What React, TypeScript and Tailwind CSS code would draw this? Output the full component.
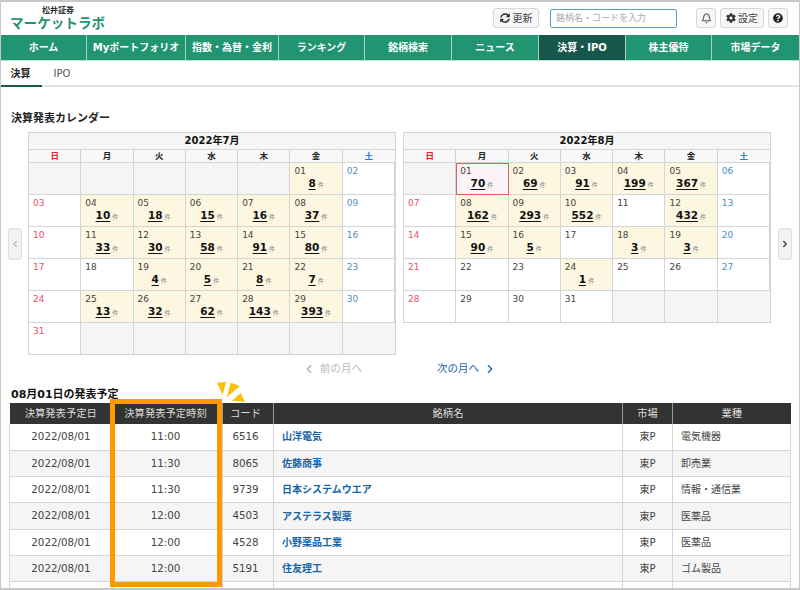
import { Bell, ChevronLeft, ChevronRight } from "lucide-react"
import { FaCog, FaQuestionCircle, FaSyncAlt } from "react-icons/fa"

type Day = { d?: string; n?: number; today?: boolean }

const navItems = [
  { label: "ホーム", w: "w-[86px]" },
  { label: "Myポートフォリオ", w: "w-[99px]" },
  { label: "指数・為替・金利", w: "w-[93px]" },
  { label: "ランキング", w: "w-[86px]" },
  { label: "銘柄検索", w: "w-[87px]" },
  { label: "ニュース", w: "w-[87px]" },
  { label: "決算・IPO", w: "w-[87px]", active: true },
  { label: "株主優待", w: "w-[86px]" },
  { label: "市場データ", w: "w-[87px]" },
]

const weekdays = ["日", "月", "火", "水", "木", "金", "土"]

const july: Day[] = [
  {}, {}, {}, {}, {}, { d: "01", n: 8 }, { d: "02" },
  { d: "03" }, { d: "04", n: 10 }, { d: "05", n: 18 }, { d: "06", n: 15 }, { d: "07", n: 16 }, { d: "08", n: 37 }, { d: "09" },
  { d: "10" }, { d: "11", n: 33 }, { d: "12", n: 30 }, { d: "13", n: 58 }, { d: "14", n: 91 }, { d: "15", n: 80 }, { d: "16" },
  { d: "17" }, { d: "18" }, { d: "19", n: 4 }, { d: "20", n: 5 }, { d: "21", n: 8 }, { d: "22", n: 7 }, { d: "23" },
  { d: "24" }, { d: "25", n: 13 }, { d: "26", n: 32 }, { d: "27", n: 62 }, { d: "28", n: 143 }, { d: "29", n: 393 }, { d: "30" },
  { d: "31" }, {}, {}, {}, {}, {}, {},
]

const august: Day[] = [
  {}, { d: "01", n: 70, today: true }, { d: "02", n: 69 }, { d: "03", n: 91 }, { d: "04", n: 199 }, { d: "05", n: 367 }, { d: "06" },
  { d: "07" }, { d: "08", n: 162 }, { d: "09", n: 293 }, { d: "10", n: 552 }, { d: "11" }, { d: "12", n: 432 }, { d: "13" },
  { d: "14" }, { d: "15", n: 90 }, { d: "16", n: 5 }, { d: "17" }, { d: "18", n: 3 }, { d: "19", n: 3 }, { d: "20" },
  { d: "21" }, { d: "22" }, { d: "23" }, { d: "24", n: 1 }, { d: "25" }, { d: "26" }, { d: "27" },
  { d: "28" }, { d: "29" }, { d: "30" }, { d: "31" }, {}, {}, {},
]

const rows = [
  { time: "11:00", code: "6516", name: "山洋電気", sector: "電気機器" },
  { time: "11:30", code: "8065", name: "佐藤商事", sector: "卸売業" },
  { time: "11:30", code: "9739", name: "日本システムウエア", sector: "情報・通信業" },
  { time: "12:00", code: "4503", name: "アステラス製薬", sector: "医薬品" },
  { time: "12:00", code: "4528", name: "小野薬品工業", sector: "医薬品" },
  { time: "12:00", code: "5191", name: "住友理工", sector: "ゴム製品" },
]

const columns = [
  { label: "決算発表予定日", className: "" },
  { label: "決算発表予定時刻", className: "pr-[4px]" },
  { label: "コード", className: "pr-[5px]" },
  { label: "銘柄名", className: "" },
  { label: "市場", className: "" },
  { label: "業種", className: "" },
]

function DayCell({ day, col }: { day: Day; col: number }) {
  if (!day.d) return <div className="border-r border-b border-[#d4d4d4] bg-[#f5f5f5] last:border-r-0" />
  const dateColor = col === 0 ? "text-[#f0505a]" : col === 6 ? "text-[#4a8fcb]" : "text-[#444]"
  const bg = day.today ? "bg-[#fdf2f6]" : day.n ? "bg-[#fdf6e0]" : "bg-white"
  return (
    <div
      className={`relative flex flex-col border-r border-b pt-[2px] pl-[4px] last:border-r-0 ${bg} ${
        day.today ? "border-[#e85a64] outline outline-1 outline-[#e85a64] -outline-offset-1" : "border-[#d4d4d4]"
      }`}
    >
      <span className={`text-[9px] leading-[12px] ${dateColor}`}>{day.d}</span>
      {day.n !== undefined && (
        <span className="-mt-[1px] flex items-baseline justify-center pr-[4px] leading-[14px]">
          <span className="text-[10.5px] font-bold text-[#111] underline underline-offset-2">{day.n}</span>
          <span className="ml-[2px] text-[6px] text-[#888]">件</span>
        </span>
      )}
    </div>
  )
}

function Calendar({ title, days }: { title: string; days: Day[] }) {
  return (
    <div className="w-[368px] border-x border-t border-[#d4d4d4]">
      <div className="h-[17px] border-b border-[#d4d4d4] bg-[#f4f7f5] text-center text-[10px] leading-[15px] font-bold text-[#111]">
        {title}
      </div>
      <div className="grid h-[13px] grid-cols-7 border-b border-[#d4d4d4] bg-[#f7f8f7]">
        {weekdays.map((w, i) => (
          <div
            key={w}
            className={`border-r border-[#d4d4d4] text-center text-[8.5px] leading-[12px] font-bold last:border-r-0 ${
              i === 0 ? "text-[#e8202a]" : i === 6 ? "text-[#2f80c8]" : "text-[#222]"
            }`}
          >
            {w}
          </div>
        ))}
      </div>
      <div className="grid auto-rows-[32px] grid-cols-7">
        {days.map((day, i) => (
          <DayCell key={i} day={day} col={i % 7} />
        ))}
      </div>
    </div>
  )
}

function PagerButton({ right }: { right?: boolean }) {
  return (
    <div className="mt-[96px] flex h-[32px] w-[14px] items-center justify-center rounded-[3px] border border-[#ddd] bg-[#f2f2f2]">
      {right ? (
        <ChevronRight className="h-[10px] w-[10px] text-[#333]" strokeWidth={3} />
      ) : (
        <ChevronLeft className="h-[10px] w-[10px] text-[#bbb]" strokeWidth={3} />
      )}
    </div>
  )
}

export default function App() {
  return (
    <div
      className="relative h-[590px] w-[800px] overflow-hidden border-t-2 border-l border-r border-b-2 border-[#c8c8c8] bg-white text-[#444]"
      style={{ fontFamily: '"DejaVu Sans", "Noto Sans CJK JP", sans-serif' }}
    >
      <header className="flex h-[33px] items-start justify-between">
        <div className="pl-[9px]">
          <div className="pl-[32px] pt-[5px] text-[8px] leading-[8px] font-bold text-[#333]">松井証券</div>
          <div className="text-[13.6px] leading-[17px] font-bold text-[#1f9470]">マーケットラボ</div>
        </div>
        <div className="flex items-center pt-[6px] pr-[11px]">
          <button className="flex h-[20px] w-[46px] items-center justify-center gap-[3px] rounded-[3px] border border-[#d8d8d8] bg-[#f7f7f7] text-[10px] text-[#444]">
            <FaSyncAlt className="h-[10px] w-[10px] text-[#333]" />
            更新
          </button>
          <input
            readOnly
            placeholder="銘柄名・コードを入力"
            className="ml-[11px] h-[19px] w-[127px] rounded-[2px] border border-[#5b9bd5] px-[5px] text-[9px] placeholder:text-[#aaa]"
          />
          <button className="ml-[19px] flex h-[20px] w-[20px] items-center justify-center rounded-[3px] border border-[#d8d8d8] bg-[#f7f7f7]">
            <Bell className="h-[11px] w-[11px] text-[#333]" />
          </button>
          <button className="ml-[4px] flex h-[20px] w-[44px] items-center justify-center gap-[2px] rounded-[3px] border border-[#d8d8d8] bg-[#f7f7f7] text-[10px] text-[#444]">
            <FaCog className="h-[10px] w-[10px] text-[#333]" />
            設定
          </button>
          <button className="ml-[4px] flex h-[20px] w-[20px] items-center justify-center rounded-[3px] border border-[#d8d8d8] bg-[#f7f7f7]">
            <FaQuestionCircle className="h-[10px] w-[10px] text-[#222]" />
          </button>
        </div>
      </header>

      <nav className="flex h-[26px] border-b border-[#bfe3d6]">
        {navItems.map((item) => (
          <div
            key={item.label}
            className={`flex items-center justify-center border-r border-[#a5d3c2] text-[10px] font-bold whitespace-nowrap text-white last:border-r-0 ${item.w} ${
              item.active ? "bg-[#17574a]" : "bg-[#219571]"
            }`}
          >
            {item.label}
          </div>
        ))}
      </nav>

      <div className="flex h-[26px] border-b-2 border-[#e2e2e2]">
        <div className="-mb-[2px] flex w-[41px] items-center justify-center border-b-2 border-[#17574a] pr-[2px] text-[10px] font-bold text-[#222]">
          決算
        </div>
        <div className="flex w-[40px] items-center justify-center text-[10px] text-[#555]">IPO</div>
      </div>

      <h2 className="mt-[24px] ml-[10px] text-[11px] leading-[16px] font-bold text-[#222]">決算発表カレンダー</h2>

      <div className="mt-[5px] flex items-start pl-[7px]">
        <PagerButton />
        <div className="ml-[6px] flex items-start gap-[7px]">
          <Calendar title="2022年7月" days={july} />
          <Calendar title="2022年8月" days={august} />
        </div>
        <div className="ml-[7px]">
          <PagerButton right />
        </div>
      </div>

      <div className="mt-[6px] flex h-[16px] items-center pl-[301px] text-[10.5px]">
        <ChevronLeft className="h-[14px] w-[14px] text-[#aaa]" />
        <span className="ml-[4px] text-[#bbb]">前の月へ</span>
        <span className="ml-[75px] text-[#1565a8]">次の月へ</span>
        <ChevronRight className="ml-[4px] h-[14px] w-[14px] text-[#1565a8]" />
      </div>

      <h2 className="mt-[10px] ml-[10px] text-[11px] leading-[15px] font-bold text-[#111]">08月01日の発表予定</h2>

      <table className="mt-[1px] ml-[8px] w-[781px] table-fixed border-collapse text-[10px]">
        <colgroup>
          <col className="w-[103px]" />
          <col className="w-[110px]" />
          <col className="w-[51px]" />
          <col className="w-[349px]" />
          <col className="w-[50px]" />
          <col className="w-[118px]" />
        </colgroup>
        <thead>
          <tr className="h-[21px] bg-[#333] text-[10.3px] text-[#ddd]">
            {columns.map((c) => (
              <th key={c.label} className={`border-r border-[#999] font-normal last:border-r-0 ${c.className}`}>
                {c.label}
              </th>
            ))}
          </tr>
        </thead>
        <tbody>
          {rows.map((r, i) => (
            <tr key={r.code} className={`h-[26.3px] border-b border-[#d4d4d4] ${i % 2 ? "bg-[#f5f5f5]" : "bg-white"}`}>
              <td className="border-x border-[#d4d4d4] text-center text-[10.3px]">2022/08/01</td>
              <td className="border-r border-[#d4d4d4] pr-[4px] text-center text-[10.3px]">{r.time}</td>
              <td className="border-r border-[#d4d4d4] pr-[5px] text-center text-[10.3px]">{r.code}</td>
              <td className="border-r border-[#d4d4d4] pl-[8px] font-bold text-[#1565a8]">{r.name}</td>
              <td className="border-r border-[#d4d4d4] text-center">東P</td>
              <td className="border-r border-[#d4d4d4] pl-[8px]">{r.sector}</td>
            </tr>
          ))}
          <tr className="h-[26px] border-x border-[#d4d4d4]">
            <td className="border-r border-[#d4d4d4]" />
            <td className="border-r border-[#d4d4d4]" />
            <td className="border-r border-[#d4d4d4]" />
            <td className="border-r border-[#d4d4d4]" />
            <td className="border-r border-[#d4d4d4]" />
            <td />
          </tr>
        </tbody>
      </table>

      {/* orange highlight over the time column */}
      <div className="absolute top-[397px] left-[109px] h-[188px] w-[112px] border-[5px] border-[#ff9900]" />
      <svg className="absolute top-[380px] left-[216px]" width="30" height="24" viewBox="0 0 30 24">
        <polygon points="0,0.7 9,0 5.7,13" fill="#fcc200" />
        <polygon points="13.7,0.7 23,4 10,15" fill="#fcc200" />
        <polygon points="28,19.7 15,18.7 23.7,11" fill="#fcc200" />
      </svg>
    </div>
  )
}
